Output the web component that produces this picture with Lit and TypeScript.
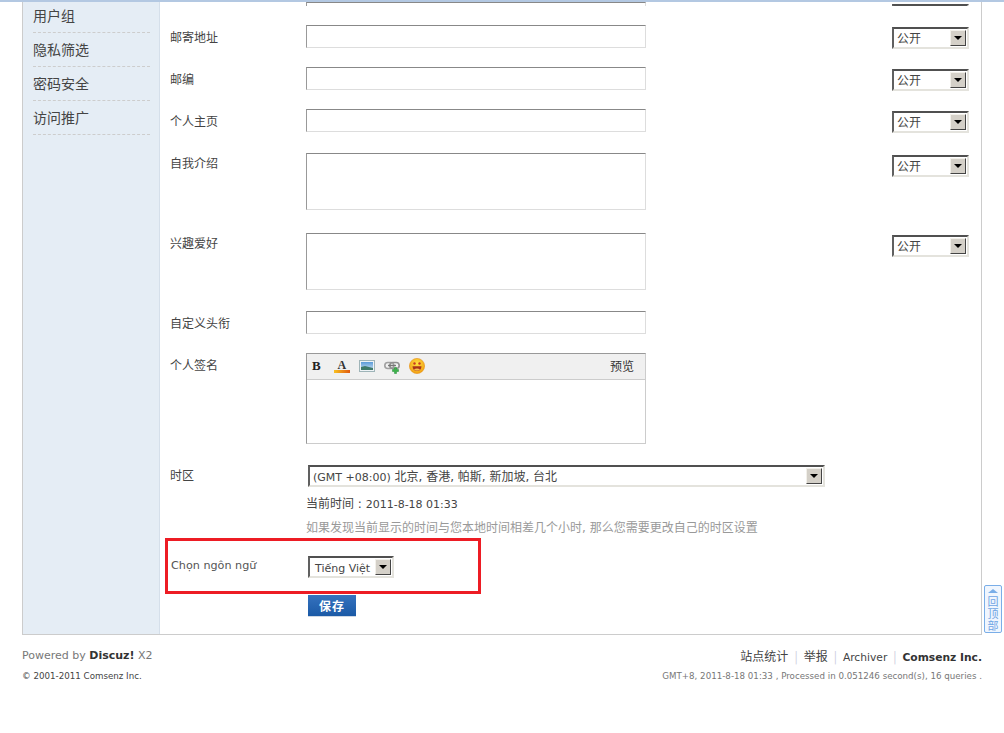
import { LitElement, html, css } from "lit";
import { customElement } from "lit/decorators.js";

const icons = {
  bold: html`<svg width="16" height="16" viewBox="0 0 16 16"><text x="3" y="12" font-family="Liberation Serif, serif" font-weight="700" font-size="13" fill="#222">B</text></svg>`,
  color: html`<svg width="16" height="16" viewBox="0 0 16 16"><defs><linearGradient id="g1"><stop offset="0" stop-color="#f8c020"/><stop offset="1" stop-color="#e05a10"/></linearGradient></defs><text x="3.5" y="10.5" font-family="Liberation Serif, serif" font-weight="700" font-size="12" fill="#333">A</text><rect x="0" y="12" width="16" height="3" fill="url(#g1)"/></svg>`,
  image: html`<svg width="16" height="16" viewBox="0 0 16 16"><defs><linearGradient id="g2" x1="0" y1="0" x2="0" y2="1"><stop offset="0" stop-color="#5a9ad8"/><stop offset="1" stop-color="#cfe4f4"/></linearGradient></defs><rect x="0.5" y="2.5" width="15" height="11" fill="#eef3f6" stroke="#9fb4b8"/><rect x="2" y="4" width="12" height="8" fill="url(#g2)"/><path d="M2 9l4-1 8 2v2H2z" fill="#3f7a6a"/></svg>`,
  link: html`<svg width="16" height="16" viewBox="0 0 16 16"><rect x="0.8" y="4.5" width="9" height="6" rx="3" fill="none" stroke="#a0a0a0" stroke-width="1.6"/><rect x="5.8" y="4.5" width="9.4" height="6" rx="3" fill="none" stroke="#909090" stroke-width="1.6"/><path d="M4 7.5h8" stroke="#777" stroke-width="1.4"/><path d="M10.5 9.5h2v2h2v2h-2v2h-2v-2h-2v-2h2z" fill="#3cb34a" stroke="#1f8a32" stroke-width="0.5"/></svg>`,
  smile: html`<svg width="16" height="16" viewBox="0 0 16 16"><defs><radialGradient id="g3" cx="0.5" cy="0.35" r="0.7"><stop offset="0" stop-color="#ffe040"/><stop offset="1" stop-color="#f09a10"/></radialGradient></defs><circle cx="8" cy="8" r="7.6" fill="url(#g3)" stroke="#e89010" stroke-width="0.6"/><circle cx="5.5" cy="5.5" r="1.2" fill="#c83a20"/><circle cx="10.5" cy="5.5" r="1.2" fill="#c83a20"/><path d="M3.5 8.2h9c0 3-2 4.8-4.5 4.8S3.5 11.2 3.5 8.2z" fill="#a8341a"/><path d="M5 11.5c1.5-1.2 4.5-1.2 6 0-1.5 1.6-4.5 1.6-6 0z" fill="#f8c050"/></svg>`,
};

@customElement("app-root")
export class AppRoot extends LitElement {
  static styles = css`
    :host { display: block; height: 733px; position: relative; overflow: hidden; background: #fff; color: #444;
      font: 12px/16px "DejaVu Sans", "Noto Sans CJK SC", sans-serif; }
    .lat { font-size: 11px; }
    .topbar { height: 2px; background: #b3c8e2; }
    .wrap { margin: 0 22px; width: 958px; display: flex; border: 1px solid #ccc; border-top: 0; height: 632px; }
    .side { border-right: 1px solid #d5dfea; background: #e5edf5; padding: 0 9px 0 10px; flex: none; width: 117px; }
    .side a { display: block; font-size: 14px; font-family: "Noto Sans CJK SC", sans-serif; line-height: 20px; color: #444; border-bottom: 1px dashed #cdcdcd; height: 27px; padding-top: 6px; }
    .side a:first-child { padding-top: 3px; height: 27px; }
    .main { flex: 1; padding-left: 10px; }
    .row { display: grid; grid-template-columns: 136px 586px 77px; margin-bottom: 19px; }
    .row.clip { height: 4px; overflow: hidden; align-items: end; }
    .row.m23 { margin-bottom: 23px; }
    .row.m21 { margin-bottom: 21px; }
    .label { font-family: "Noto Sans CJK SC", sans-serif; padding-top: 4px; color: #444; }
    .label.up { padding-top: 2px; }
    .input { width: 340px; height: 23px; box-sizing: border-box; background: #fff; border: 1px solid #ddd; border-top-color: #888; border-left-color: #999; }
    .area { height: 57px; }
    .sel { box-sizing: border-box; height: 22px; display: flex; align-items: center; justify-content: space-between; background: #fff; border: 2px solid #e4e3dd; border-top-color: #505050; border-left-color: #606060; padding-left: 3px; color: #444; white-space: nowrap; }
    .sel > span { padding-top: 2px; }
    .sel .arrow { width: 16px; height: 16px; margin-right: 1px; box-sizing: border-box; background: #d4d0c8; border: 1px solid; border-color: #f2f0ea #444 #444 #f2f0ea; display: flex; align-items: center; justify-content: center; flex: none; }
    .sel .arrow i { border: 4px solid transparent; border-top: 4px solid #000; border-bottom: 0; display: block; }
    .priv { width: 77px; margin: 2px 0 -1px; }
    .tz { width: 517px; margin-left: 2px; }
    .lang { width: 86px; margin-left: 2px; padding-left: 5px; }
    .editor { width: 340px; height: 91px; box-sizing: border-box; border: 1px solid #ccc; border-top-color: #999; border-left-color: #999; }
    .tools { height: 26px; box-sizing: border-box; background: #f0f0f0; border-bottom: 1px solid #ccc; display: flex; align-items: flex-start; padding: 4px 0 0 2px; gap: 9px; }
    .tools svg { display: block; }
    .tools span { margin-left: auto; margin-right: 11px; font-family: "Noto Sans CJK SC", sans-serif; color: #333; }
    .now { margin: 9px 0 0 0; color: #444; }
    .hint { margin: 7px 0 0 0; color: #999; }
    .row.tzrow { margin-bottom: 20px; }
    .row.lgrow { margin-bottom: 17px; }
    .lgrow .label { font-family: "DejaVu Sans", sans-serif; font-size: 11.2px; padding-left: 1px; color: #555; padding-top: 2px; white-space: nowrap; }
    .save { margin-left: 138px; width: 48px; height: 22px; background: linear-gradient(#3572bf, #1b5aa6); color: #fff; font-weight: 700; font-family: "Noto Sans CJK SC", sans-serif; text-align: center; line-height: 21px; letter-spacing: 1px; box-sizing: border-box; border-bottom: 1px solid #cfd8e4; }
    .foot { margin: 0 22px; width: 960px; display: flex; justify-content: space-between; padding-top: 13px; font-size: 11px; }
    .foot .l1 { height: 16px; margin-bottom: 4px; color: #777; }
    .foot .l2 { font-size: 8.7px; color: #444; line-height: 16px; }
    .foot b { color: #333; }
    .r { text-align: right; }
    .r .l1 { color: #444; font-size: 10.7px; }
    .r .l1 span { font-family: "Noto Sans CJK SC", sans-serif; font-size: 12px; }
    .r .sep { color: #ccd; margin: 0 6px; }
    .r .l2 { color: #777; }
    .redbox { position: absolute; left: 165px; top: 538px; width: 316px; height: 56px; box-sizing: border-box; border: 3px solid #ed1c24; pointer-events: none; }
    .totop { position: absolute; left: 984px; top: 585px; width: 18px; height: 48px; box-sizing: border-box; border: 1px solid #7aaee8; border-radius: 2px; background: #f0f6fe; color: #6fa5e4; font-family: "Noto Sans CJK SC", sans-serif; font-size: 11px; letter-spacing: 1px; writing-mode: vertical-rl; text-orientation: upright; line-height: 16px; padding-top: 10px; }
    .totop::before { content: ""; position: absolute; left: 3px; top: 3px; border: 5px solid transparent; border-top: 0; border-bottom: 4px solid #7aaee8; }
  `;

  private sel(cls: string, text: unknown) {
    return html`<div class="sel ${cls}"><span>${text}</span><div class="arrow"><i></i></div></div>`;
  }

  private row(label: string, cls = "", area = false, priv = true) {
    return html`<div class="row ${cls}">
      <div class="label ${area ? "up" : ""}">${label}</div>
      <div><div class="input ${area ? "area" : ""}"></div></div>
      <div>${priv ? this.sel("priv", "公开") : ""}</div>
    </div>`;
  }

  render() {
    return html`
      <div class="topbar"></div>
      <div class="wrap">
        <div class="side">
          <a>用户组</a><a>隐私筛选</a><a>密码安全</a><a>访问推广</a>
        </div>
        <div class="main">
          <div class="row clip"><div></div><div><div class="input"></div></div><div>${this.sel("priv", "公开")}</div></div>
          ${this.row("邮寄地址")}
          ${this.row("邮编")}
          ${this.row("个人主页", "m21")}
          ${this.row("自我介绍", "m23", true)}
          ${this.row("兴趣爱好", "m21", true)}
          ${this.row("自定义头衔", "", false, false)}
          <div class="row m21">
            <div class="label">个人签名</div>
            <div><div class="editor">
              <div class="tools">${icons.bold}${icons.color}${icons.image}${icons.link}${icons.smile}<span>预览</span></div>
            </div></div>
            <div></div>
          </div>
          <div class="row tzrow">
            <div class="label up">时区</div>
            <div>
              ${this.sel("tz", html`<span class="lat">(GMT +08:00)</span> 北京, 香港, 帕斯, 新加坡, 台北`)}
              <div class="now">当前时间 : <span class="lat">2011-8-18 01:33</span></div>
              <div class="hint">如果发现当前显示的时间与您本地时间相差几个小时, 那么您需要更改自己的时区设置</div>
            </div>
            <div></div>
          </div>
          <div class="row lgrow">
            <div class="label">Chọn ngôn ngữ</div>
            <div>${this.sel("lang", html`<span class="lat">Tiếng Việt</span>`)}</div>
            <div></div>
          </div>
          <div class="save">保存</div>
        </div>
      </div>
      <div class="foot">
        <div>
          <div class="l1">Powered by <b>Discuz!</b> X2</div>
          <div class="l2">© 2001-2011 Comsenz Inc.</div>
        </div>
        <div class="r">
          <div class="l1"><span>站点统计</span><span class="sep">|</span><span>举报</span><span class="sep">|</span>Archiver<span class="sep">|</span><b>Comsenz Inc.</b></div>
          <div class="l2">GMT+8, 2011-8-18 01:33 , Processed in 0.051246 second(s), 16 queries .</div>
        </div>
      </div>
      <div class="redbox"></div>
      <div class="totop">回顶部</div>
    `;
  }
}
